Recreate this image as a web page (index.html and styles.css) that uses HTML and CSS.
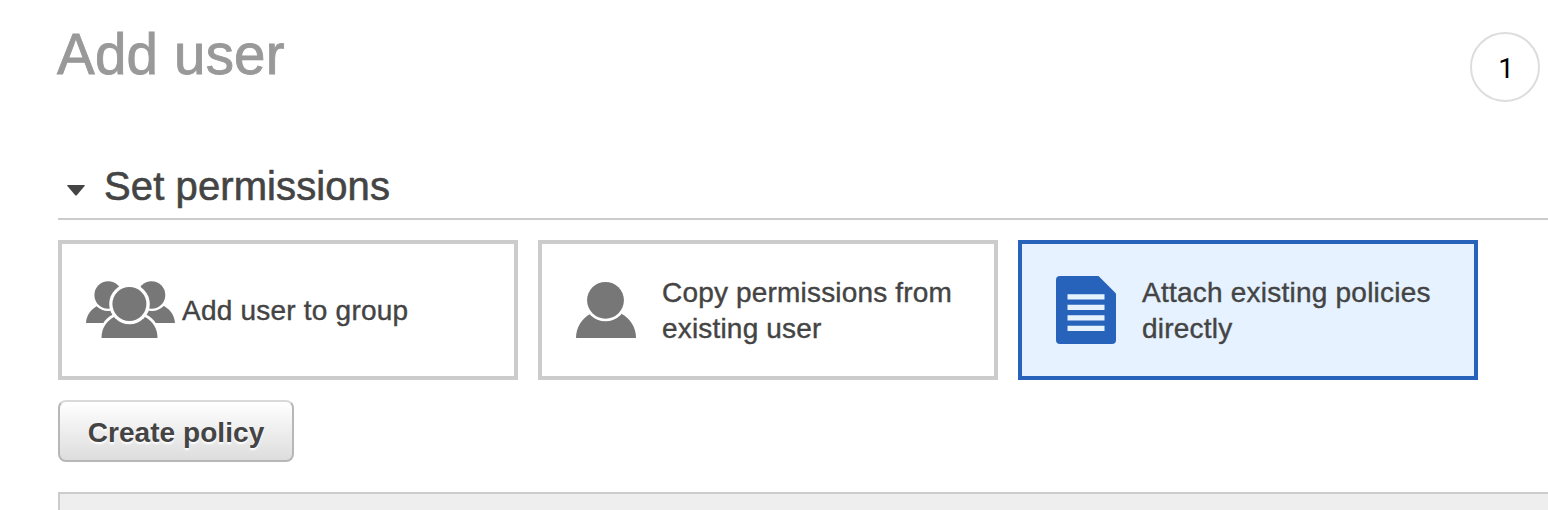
FILE: index.html
```html
<!DOCTYPE html>
<html lang="en">
<head>
<meta charset="utf-8">
<title>Add user</title>
<link rel="stylesheet" href="styles.css">
</head>
<body>
<header class="page-header">
  <h1 class="page-title">Add user</h1>
  <div class="step">1</div>
</header>
<main class="content">
  <div class="section-head">
    <svg class="caret" viewBox="0 0 18 11"><path d="M.8 0h16.4q1.300 0 .4 1.100L10 10q-1 1-2 0L.4 1.100Q-.5 0 .8 0z"/></svg>
    <h2 class="section-title">Set permissions</h2>
  </div>
  <div class="cards">
    <div class="card card-group">
      <svg class="icon-group" viewBox="0 0 90 58">
        <path class="person" d="M0 42C.5 34 5 28.500 11 25h22c8 3 12 10 12 17zM44 42c0-7 5-14 12-17h22c6 3.500 10.500 9 11 17z"/>
        <g class="gap"><circle cx="22" cy="14" r="16"/><circle cx="66" cy="14" r="16"/></g>
        <g class="person"><circle cx="22.200" cy="14" r="13.800"/><circle cx="65.500" cy="14" r="13.800"/></g>
        <path class="gap" d="M13.300 58C13 46 18 38 27 33.500h33c9 4.500 14 12.500 13.700 24.500z"/>
        <path class="person" d="M15.500 57c0-9.500 4.500-17 13.500-21.500h29C67 40 71.500 47.500 71.500 57z"/>
        <circle class="gap" cx="43.500" cy="23" r="20.300"/>
        <circle class="person" cx="43.400" cy="23" r="17"/>
      </svg>
      <span class="label label-group">Add user to group</span>
    </div>
    <div class="card">
      <svg class="icon-user" viewBox="0 0 60 58">
        <path class="person" d="M0 57c0-10.500 5.500-19.500 15-24.500h30C54.500 37.500 60 46.500 60 57z"/>
        <circle class="gap" cx="29.500" cy="19.300" r="21"/>
        <circle class="person" cx="29.500" cy="19.300" r="18.400"/>
      </svg>
      <span class="label label-copy">Copy permissions from<br>existing user</span>
    </div>
    <div class="card card-selected">
      <svg class="icon-policy" viewBox="0 0 60 68">
        <path class="sheet" d="M4 0h38.500L60 17.500V64a4 4 0 0 1-4 4H4a4 4 0 0 1-4-4V4a4 4 0 0 1 4-4z"/>
        <path class="lines" d="M11.500 18.200h37v5.300h-37zM11.500 28.800h37v5.200h-37zM11.500 39.200h37v5.300h-37zM11.500 49.700h37v5.200h-37z"/>
      </svg>
      <span class="label label-attach">Attach existing policies<br>directly</span>
    </div>
  </div>
  <button class="button" type="button">Create policy</button>
  <div class="toolbar"></div>
</main>
</body>
</html>
```

FILE: styles.css
```css
* { box-sizing: border-box; }
body {
  margin: 0;
  height: 510px;
  overflow: hidden;
  background: #fff;
  color: #444;
  font-family: "Liberation Sans", Arial, sans-serif;
}
.page-header {
  display: flex;
  justify-content: space-between;
  height: 163px;
  padding: 23px 8px 0 57px;
}
.page-title {
  margin: 0;
  color: #999;
  font-size: 56.5px;
  font-weight: 400;
  line-height: 64px;
  letter-spacing: .2px;
  -webkit-text-stroke: .9px #999;
}
.step {
  display: flex;
  align-items: center;
  justify-content: center;
  width: 70px;
  height: 70px;
  margin-top: 9px;
  padding: 3px 0 0 2px;
  border: 2px solid #ddd;
  border-radius: 50%;
  color: #000;
  font: 28px/36px Roboto, sans-serif;
}
.content { padding-left: 58px; }
.section-head {
  display: flex;
  height: 57px;
  padding-left: 9px;
  border-bottom: 2px solid #ccc;
}
.caret {
  width: 18px;
  height: 11px;
  margin: 22px 19px 0 0;
  fill: #444;
}
.section-title {
  margin: 0;
  font-size: 40px;
  font-weight: 400;
  line-height: 47px;
  letter-spacing: .1px;
  -webkit-text-stroke: .6px #444;
}
.cards {
  display: flex;
  gap: 20px;
  margin-top: 20px;
}
.card {
  display: flex;
  align-items: center;
  gap: 26px;
  width: 460px;
  height: 140px;
  padding-left: 34px;
  border: 4px solid #ccc;
  white-space: nowrap;
}
.card-group { gap: 6px; padding-left: 24px; }
.card-selected { border-color: #2863bb; background: #e6f2ff; }
.icon-group { width: 90px; height: 58px; }
.icon-user { width: 60px; height: 58px; }
.icon-policy { width: 60px; height: 68px; }
.person { fill: #777; }
.gap { fill: #fff; }
.sheet { fill: #2863bb; }
.lines { fill: #e6f2ff; }
.label {
  padding-top: 2px;
  font-size: 28px;
  line-height: 36px;
  -webkit-text-stroke: .4px #444;
}
.label-group { letter-spacing: .22px; }
.label-copy { letter-spacing: .18px; }
.label-attach { letter-spacing: .23px; }
.button {
  display: block;
  width: 236px;
  height: 62px;
  margin-top: 20px;
  padding: 4px 0 0;
  border: 2px solid #b7b7b7;
  border-top-color: #d9d9d9;
  border-radius: 8px;
  background: linear-gradient(#fff, #ddd);
  color: #444;
  font: bold 28px/36px "Liberation Sans", Arial, sans-serif;
  letter-spacing: .05px;
  text-shadow: 0 2px 2px #fff;
}
.toolbar {
  height: 18px;
  margin-top: 30px;
  border: solid #ccc;
  border-width: 2px 0 0 2px;
  background: #eee;
}
```
